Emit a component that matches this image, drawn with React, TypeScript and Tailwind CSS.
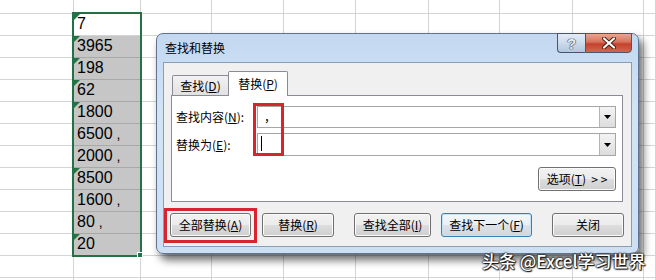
import React from "react";

const colW = [
  "w-[74px]",
  "w-[67px]",
  "w-[71px]",
  "w-[72px]",
  "w-[72px]",
  "w-[73px]",
  "w-[71px]",
  "w-[73px]",
  "w-[71px]",
  "flex-1",
];

const cellTexts = ["7", "3965", "198", "62", "1800", "6500", "2000", "8500", "1600", "80", "20"];
const comma = [false, false, false, false, false, true, true, false, true, true, false];
const tri = [true, true, true, true, true, false, false, true, false, false, true];

const rowH = [
  "h-[14px]",
  "h-[22px]", "h-[22px]", "h-[22px]", "h-[22px]", "h-[22px]", "h-[22px]",
  "h-[22px]", "h-[22px]", "h-[22px]", "h-[22px]", "h-[22px]", "h-[22px]",
  "h-[22px]",
];

function Sheet() {
  return (
    <div className="flex flex-col w-[656px]">
      {rowH.map((h, r) => (
        <div key={r} className={`flex ${h} shrink-0`}>
          {colW.map((w, c) => {
            const isData = c === 1 && r >= 1 && r <= 11;
            const idx = r - 1;
            const selected = isData && idx > 0;
            return (
              <div
                key={c}
                className={`${w} shrink-0 relative border-r border-b ${
                  selected ? "bg-[#c6c6c6] border-[#a9a9a9]" : "border-[#d4d4d4]"
                }`}
              >
                {isData && (
                  <>
                    {tri[idx] && (
                      <span className="absolute left-0 top-0 w-0 h-0 border-t-[6px] border-t-[#217346] border-r-[6px] border-r-transparent" />
                    )}
                    <span className="absolute left-[3px] top-0 text-[16px] leading-[20px] text-black [font-family:'Liberation_Sans',sans-serif] whitespace-nowrap">
                      {cellTexts[idx]}
                      {comma[idx] && <span className="ml-[4px] text-[14px]">,</span>}
                    </span>
                  </>
                )}
              </div>
            );
          })}
        </div>
      ))}
    </div>
  );
}

function Btn({
  w,
  children,
  def,
}: {
  w: string;
  children: React.ReactNode;
  def?: boolean;
}) {
  return (
    <div
      className={`${w} h-[24px] shrink-0 rounded-[3px] border flex items-center justify-center text-[12px] leading-[14px] text-black ${
        def
          ? "border-[#3c7fb1] bg-[linear-gradient(180deg,#f3f8fb_0%,#eaeff3_50%,#dde3e8_51%,#d0d6db_100%)] shadow-[inset_0_0_0_1px_#bfe3f8]"
          : "border-[#707070] bg-[linear-gradient(180deg,#f2f2f2_0%,#ebebeb_50%,#dddddd_51%,#cfcfcf_100%)] shadow-[inset_0_0_0_1px_#fbfbfb]"
      }`}
    >
      {children}
    </div>
  );
}

function U({ children }: { children: React.ReactNode }) {
  return <span className="underline underline-offset-[1px]">{children}</span>;
}

function DropBtn() {
  return (
    <div className="ml-auto mr-0 w-[16px] h-full border-l border-[#b5b5b5] bg-[linear-gradient(180deg,#f4f4f4,#dcdcdc)] flex items-center justify-center">
      <svg width="7" height="4" viewBox="0 0 7 4">
        <path d="M0 0H7L3.5 4Z" fill="#000" />
      </svg>
    </div>
  );
}

function Dialog() {
  return (
    <div className="absolute left-[156px] top-[33px] w-[483px] h-[221px] rounded-[7px] border border-[#5f7391] bg-[linear-gradient(180deg,#c3d8f0_0%,#d2e3f5_35%,#cde0f3_100%)] shadow-[4px_6px_9px_rgba(0,0,0,0.6)] flex flex-col [font-family:'Noto_Sans_CJK_SC',sans-serif]">
      <div className="h-[28px] shrink-0 flex justify-between">
        <div className="pl-[8px] pt-[6px] text-[12px] leading-[16px] text-black">查找和替换</div>
        <div className="flex mr-[6px] -mt-px h-[20px]">
          <div className="w-[28px] h-full rounded-bl-[4px] border border-r-0 border-[#46566e] bg-[linear-gradient(180deg,#e3ebf5_0%,#ccdbeb_50%,#b3c6dd_100%)] flex items-center justify-center">
            <span className="text-[15px] leading-[15px] font-bold text-[#e9eef4] [text-shadow:0_0_1px_#2d3a4c,0_0_1px_#2d3a4c,0_0_1px_#2d3a4c] [font-family:'Liberation_Sans',sans-serif]">
              ?
            </span>
          </div>
          <div className="w-[47px] h-full rounded-br-[4px] border border-[#46566e] bg-[linear-gradient(180deg,#e8a594_0%,#d7715d_45%,#c4412c_55%,#d2674f_100%)] flex items-center justify-center">
            <svg width="14" height="12" viewBox="0 0 14 12">
              <path
                d="M2 1.5L12 10.5M12 1.5L2 10.5"
                stroke="#4a1a12"
                strokeWidth="4"
                strokeLinecap="round"
              />
              <path
                d="M2 1.5L12 10.5M12 1.5L2 10.5"
                stroke="#ffffff"
                strokeWidth="2.2"
                strokeLinecap="round"
              />
            </svg>
          </div>
        </div>
      </div>
      <div className="mx-[6px] mb-[6px] flex-1 border border-[#8a9db8] bg-[#f0f0f0] flex flex-col">
        <div className="pl-[7px] pt-[8px]">
          <div className="flex items-end h-[24px] pl-px">
            <div className="w-[57px] h-[20px] border border-b-0 border-[#898c95] rounded-t-[2px] bg-[linear-gradient(180deg,#f2f2f2,#e1e1e1)] flex items-center justify-center text-[12px] leading-[14px] text-black">
              查找(<U>D</U>)
            </div>
            <div className="relative z-10 -ml-px -mb-px w-[60px] h-[25px] border border-b-0 border-[#898c95] rounded-t-[2px] bg-white flex items-center justify-center text-[12px] leading-[14px] text-black">
              替换(<U>P</U>)
            </div>
          </div>
          <div className="w-[452px] h-[107px] border border-[#898c95] bg-white flex flex-col">
            <div className="flex mt-[10px] h-[22px] items-center">
              <div className="w-[85px] pl-[4px] text-[12px] leading-[14px] text-black">
                查找内容(<U>N</U>):
              </div>
              <div className="w-[359px] h-[22px] border border-[#a6a6a6] bg-white flex">
                <span className="pl-[6px] text-[12px] leading-[20px] text-black">，</span>
                <DropBtn />
              </div>
            </div>
            <div className="flex mt-[5px] h-[23px] items-center">
              <div className="w-[85px] pl-[4px] text-[12px] leading-[14px] text-black">
                替换为(<U>E</U>):
              </div>
              <div className="w-[359px] h-[23px] border border-[#a6a6a6] bg-white flex">
                <span className="ml-[3px] mt-[2px] w-px h-[15px] bg-black" />
                <DropBtn />
              </div>
            </div>
            <div className="flex justify-end pr-[6px] mt-[11px]">
              <Btn w="w-[78px]">
                选项(<U>T</U>)&nbsp;&nbsp;&gt;&nbsp;&gt;
              </Btn>
            </div>
          </div>
        </div>
        <div className="flex pl-[6px] mt-[11px]">
          <Btn w="w-[81px]">
            全部替换(<U>A</U>)
          </Btn>
          <div className="ml-[11px]">
            <Btn w="w-[72px]">
              替换(<U>R</U>)
            </Btn>
          </div>
          <div className="ml-[20px]">
            <Btn w="w-[77px]">
              查找全部(<U>I</U>)
            </Btn>
          </div>
          <div className="ml-[10px]">
            <Btn w="w-[91px]" def>
              查找下一个(<U>F</U>)
            </Btn>
          </div>
          <div className="ml-[20px]">
            <Btn w="w-[72px]">关闭</Btn>
          </div>
        </div>
      </div>
    </div>
  );
}

export default function App() {
  return (
    <div className="relative w-[656px] h-[280px] overflow-hidden bg-white">
      <Sheet />
      {/* selection border */}
      <div className="absolute left-[72px] top-[12px] w-[70px] h-[245px] border-2 border-[#217346]" />
      <div className="absolute left-[137px] top-[252px] w-[6px] h-[6px] bg-[#217346] border border-white" />
      <Dialog />
      {/* red highlight boxes */}
      <div className="absolute left-[253px] top-[103px] w-[31px] h-[53px] border-[3px] border-[#d7242f]" />
      <div className="absolute left-[164px] top-[208px] w-[93px] h-[35px] border-[3px] border-[#d7242f]" />
      {/* watermark */}
      <div className="absolute left-[482px] top-[250px] text-[17px] leading-[22px] font-medium text-white whitespace-nowrap [font-family:'Noto_Sans_CJK_SC',sans-serif] [text-shadow:0_0_2px_#111,0_0_2px_#111,0_0_1px_#111,1px_1px_1px_#111]">
        头条 @Excel学习世界
      </div>
    </div>
  );
}
